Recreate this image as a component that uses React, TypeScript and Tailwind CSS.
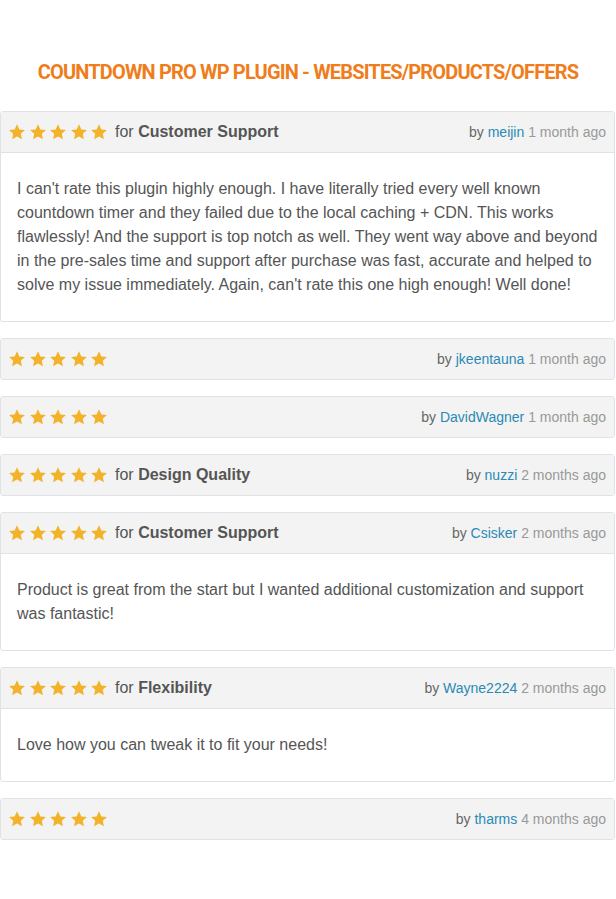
import React from "react";

type Review = {
  category?: string;
  user: string;
  time: string;
  body?: string[];
};

const reviews: Review[] = [
  {
    category: "Customer Support",
    user: "meijin",
    time: "1 month ago",
    body: [
      "I can't rate this plugin highly enough. I have literally tried every well known countdown timer and they failed due to the local caching + CDN. This works flawlessly! And the support is top notch as well. They went way above and beyond in the pre-sales time and support after purchase was fast, accurate and helped to solve my issue immediately. Again, can't rate this one high enough! Well done!",
    ],
  },
  { user: "jkeentauna", time: "1 month ago" },
  { user: "DavidWagner", time: "1 month ago" },
  { category: "Design Quality", user: "nuzzi", time: "2 months ago" },
  {
    category: "Customer Support",
    user: "Csisker",
    time: "2 months ago",
    body: [
      "Product is great from the start but I wanted additional customization and support was fantastic!",
    ],
  },
  {
    category: "Flexibility",
    user: "Wayne2224",
    time: "2 months ago",
    body: ["Love how you can tweak it to fit your needs!"],
  },
  { user: "tharms", time: "4 months ago" },
];

function Star() {
  return (
    <svg width="18" height="18" viewBox="0 0 24 24" className="block">
      <path
        d="M12 1.6l3.15 6.9 7.45.8-5.58 5.05 1.58 7.35L12 17.9l-6.6 3.8 1.58-7.35L1.4 9.3l7.45-.8z"
        fill="#f2b32b"
      />
    </svg>
  );
}

function Stars() {
  return (
    <div className="flex items-center gap-[2.5px]">
      {[0, 1, 2, 3, 4].map((i) => (
        <Star key={i} />
      ))}
    </div>
  );
}

function Card({ r }: { r: Review }) {
  return (
    <div className="border border-[#dfe3e7] rounded-[3px] bg-white overflow-hidden">
      <div
        className={`flex items-center justify-between pl-[7px] pr-[8px] bg-[#f3f3f3] ${
          r.body ? "h-[41px] border-b border-[#dfe3e7]" : "h-[40px]"
        }`}
      >
        <div className="flex items-center">
          <Stars />
          {r.category && (
            <span className="ml-[7px] text-[16px] text-[#555]">
              for <span className="font-bold">{r.category}</span>
            </span>
          )}
        </div>
        <div className="text-[14px]">
          <span className="text-[#666]">by </span>
          <span className="text-[#2a8ab5]">{r.user}</span>
          <span className="text-[#999]"> {r.time}</span>
        </div>
      </div>
      {r.body && (
        <div className="px-[16px] py-[24px] text-[16px] leading-[24px] text-[#555]">
          {r.body.map((p, i) => (
            <p key={i}>{p}</p>
          ))}
        </div>
      )}
    </div>
  );
}

export default function App() {
  return (
    <div className="w-[616px] min-h-[899px] bg-white pt-[58px] font-['Liberation_Sans',Arial,sans-serif]">
      <div className="text-center leading-[28px] mb-[23px]">
        <span className="inline-block text-[20px] font-bold text-[#ef7d1b] tracking-[-0.85px] font-['Roboto',sans-serif]">
          COUNTDOWN PRO WP PLUGIN - WEBSITES/PRODUCTS/OFFERS
        </span>
      </div>
      <div className="flex flex-col gap-[16px] pr-[1px]">
        {reviews.map((r, i) => (
          <Card key={i} r={r} />
        ))}
      </div>
    </div>
  );
}
